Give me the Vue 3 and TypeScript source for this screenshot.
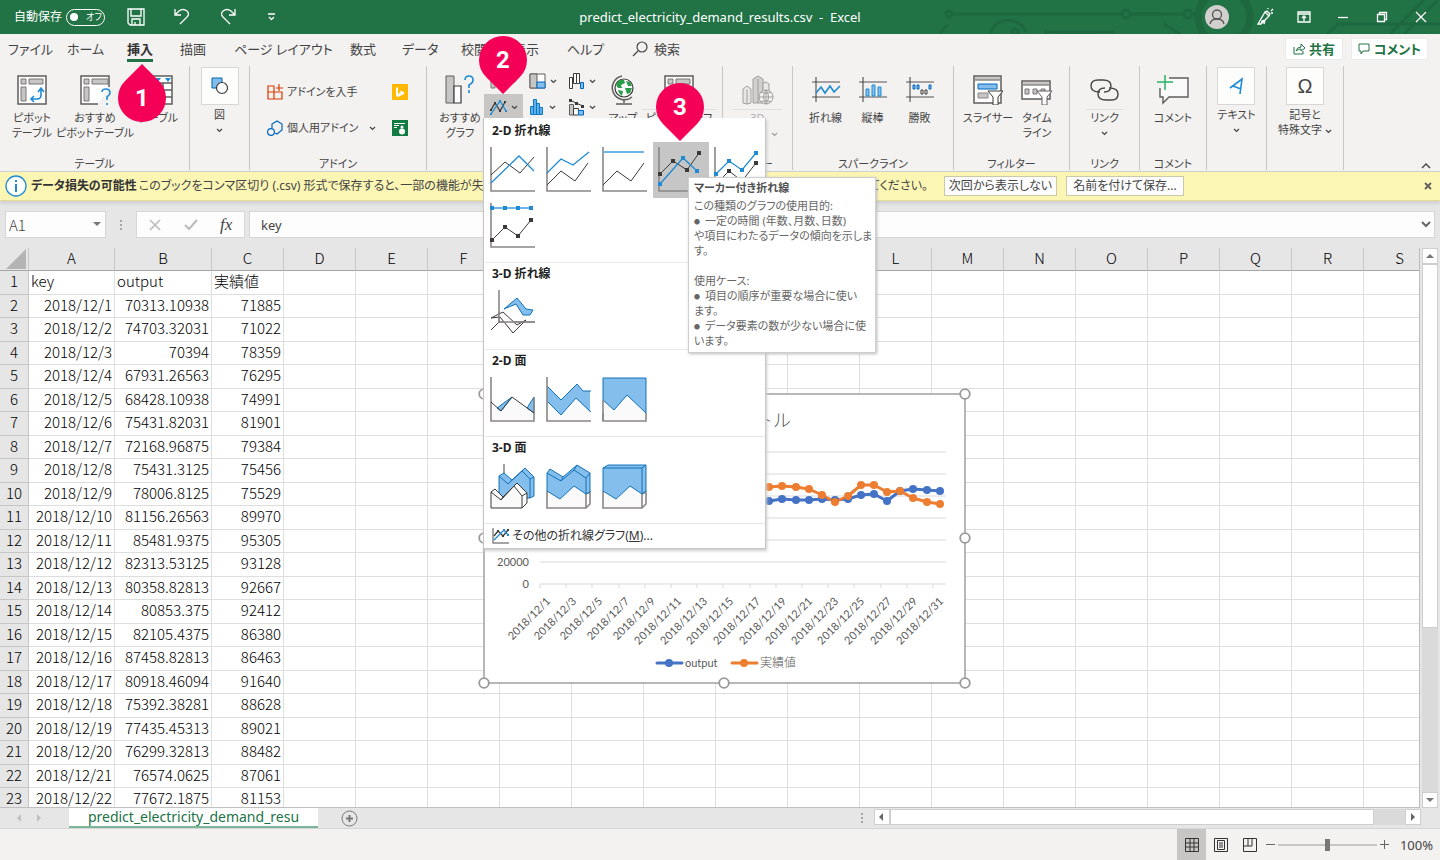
<script setup lang="ts">
import { ref } from 'vue'

interface Shape {
  d: string
  cls: string
}
interface ChartKind {
  name: string
  shapes: Shape[]
  dots?: { x: number; y: number; cls: string }[]
}
interface Section {
  title: string
  kinds: ChartKind[]
}

const tabs = ['ファイル', 'ホーム', '挿入', '描画', 'ページ レイアウト', '数式', 'データ', '校閲', '表示', 'ヘルプ']
const activeTab = ref('挿入')
const cellRef = ref('A1')
const cellValue = ref('key')
const zoom = ref(100)
const autosave = ref(false)

const letters = 'ABCDEFGHIJKLMNOPQRS'.split('')
const outputs = [
  '70313.10938', '74703.32031', '70394', '67931.26563', '68428.10938', '75431.82031', '72168.96875',
  '75431.3125', '78006.8125', '81156.26563', '85481.9375', '82313.53125', '80358.82813', '80853.375',
  '82105.4375', '87458.82813', '80918.46094', '75392.38281', '77435.45313', '76299.32813', '76574.0625',
  '77672.1875',
]
const actuals = [
  71885, 71022, 78359, 76295, 74991, 81901, 79384, 75456, 75529, 89970, 95305, 93128, 92667, 92412, 86380,
  86463, 91640, 88628, 89021, 88482, 87061, 81153,
]
const rows = [
  ['key', 'output', '実績値'],
  ...outputs.map((o, i) => [`2018/12/${i + 1}`, o, String(actuals[i])]),
]

const axes = { d: 'M1 0V44H45', cls: 'axis' }
const dots = (pts: number[][], cls: string) => pts.map(([x, y]) => ({ x, y, cls }))

const sections: Section[] = [
  {
    title: '2-D 折れ線',
    kinds: [
      { name: '折れ線', shapes: [axes, { d: 'M1 28L15 15L30 26L44 10', cls: 'dark' }, { d: 'M1 36L29 9L44 24', cls: 'blue' }] },
      { name: '積み上げ折れ線', shapes: [axes, { d: 'M1 26L15 12L27 18L43 5', cls: 'blue' }, { d: 'M1 38L15 24L29 34L42 16', cls: 'dark' }] },
      { name: '100% 積み上げ折れ線', shapes: [axes, { d: 'M1 5H42', cls: 'pale' }, { d: 'M1 38L15 24L29 34L42 16', cls: 'dark' }] },
      {
        name: 'マーカー付き折れ線',
        shapes: [axes, { d: 'M2 27L15 14L29 23L41 6', cls: 'dark' }, { d: 'M2 37L25 11L39 24', cls: 'blue' }],
        dots: [...dots([[2, 27], [15, 14], [29, 23], [41, 6]], 'dot-dark'), ...dots([[2, 37], [25, 11], [39, 24]], 'dot-blue')],
      },
      {
        name: 'マーカー付き積み上げ折れ線',
        shapes: [axes, { d: 'M2 27L15 14L28 23L42 6', cls: 'blue' }, { d: 'M2 37L15 24L28 34L42 16', cls: 'dark' }],
        dots: [...dots([[2, 27], [15, 14], [28, 23], [42, 6]], 'dot-blue'), ...dots([[2, 37], [15, 24], [28, 34], [42, 16]], 'dot-dark')],
      },
      {
        name: 'マーカー付き 100% 積み上げ折れ線',
        shapes: [axes, { d: 'M2 5H41', cls: 'pale' }, { d: 'M2 37L15 24L28 33L41 17', cls: 'dark' }],
        dots: [...dots([[2, 5], [15, 5], [28, 5], [41, 5]], 'dot-blue'), ...dots([[2, 37], [15, 24], [28, 33], [41, 17]], 'dot-dark')],
      },
    ],
  },
  {
    title: '3-D 折れ線',
    kinds: [
      {
        name: '3-D 折れ線',
        shapes: [
          { d: 'M9 0V32H45', cls: 'axis' },
          { d: 'M9 32L1 40', cls: 'dark' },
          { d: 'M14 19L27 8L36 19L43 20L40 25L33 25L26 14Z', cls: 'fill-blue' },
          { d: 'M1 28L13 22L27 35L36 30L23 43L10 27Z', cls: 'fill-white' },
          { d: 'M9 22V32H45', cls: 'axis' },
        ],
      },
    ],
  },
  {
    title: '2-D 面',
    kinds: [
      {
        name: '面',
        shapes: [
          { d: 'M1 25L11 34L22 20L44 36V44H1Z', cls: 'fill-none' },
          { d: 'M7 31L22 20L11 34ZM37 31L44 20V36Z', cls: 'fill-blue' },
          { d: 'M1 0V44H44V20', cls: 'axis' },
          { d: 'M1 25L11 34L22 20L44 36', cls: 'dark' },
        ],
      },
      {
        name: '積み上げ面',
        shapes: [
          { d: 'M1 24L15 38L30 21L44 35V44H1Z', cls: 'fill-none' },
          { d: 'M1 9L15 23L31 7L37 14H44V35L30 21L15 38L1 24Z', cls: 'fill-pale' },
          { d: 'M1 9L15 23L31 7L37 14H45M1 24L15 38L30 21L45 35', cls: 'deep' },
          axes,
        ],
      },
      {
        name: '100% 積み上げ面',
        shapes: [
          { d: 'M1 23L12 33L25 18L44 36V44H1Z', cls: 'fill-none' },
          { d: 'M1 36V44H44V36', cls: 'axis' },
          { d: 'M1 1H44V36L25 18L12 33L1 23Z', cls: 'fill-blue' },
          { d: 'M1 23V44', cls: 'axis' },
        ],
      },
    ],
  },
  {
    title: '3-D 面',
    kinds: [
      {
        name: '3-D 面',
        shapes: [
          { d: 'M14 0V12', cls: 'axis' },
          { d: 'M9 12L14 9L22 16L35 4L44 13V32L40 34H9Z', cls: 'fill-blue' },
          { d: 'M9 12L18 20L32 7L40 15V34M40 15L44 13M18 20L22 16M32 7L35 4', cls: 'deep' },
          { d: 'M1 28L5 25L13 33L27 19L37 29V39L32 44H1Z', cls: 'fill-white' },
          { d: 'M1 28L11 36L24 22L32 32V44M32 32L37 29M11 36L13 33M24 22L27 19', cls: 'dark' },
        ],
      },
      {
        name: '3-D 積み上げ面',
        shapes: [
          { d: 'M1 27L14 35L28 22L40 30V44H1Z', cls: 'fill-none' },
          { d: 'M1 27V44H40L44 40V28L40 30V44', cls: 'axis' },
          { d: 'M1 9L4 5L17 13L31 1L44 9V28L40 30L28 22L14 35L1 27Z', cls: 'fill-blue' },
          { d: 'M1 9L15 17L28 6L40 14V30M40 14L44 9M15 17L17 13M28 6L31 1', cls: 'deep' },
        ],
      },
      {
        name: '3-D 100% 積み上げ面',
        shapes: [
          { d: 'M1 27L14 35L28 22L40 30V44H1Z', cls: 'fill-none' },
          { d: 'M1 27V44H40L44 40V28L40 30V44', cls: 'axis' },
          { d: 'M1 4L6 1H44V27L40 30L28 22L14 35L1 27Z', cls: 'fill-blue' },
          { d: 'M1 4H40V30M40 4L44 1', cls: 'deep' },
        ],
      },
    ],
  },
]

const px = [285, 298, 312, 325, 338, 351, 364, 377, 390, 403, 416, 429, 443, 456]
const blueY = [107, 105, 106, 106, 105, 106, 105, 101, 100, 107, 97, 95, 96, 97]
const orangeY = [93, 92, 93, 95, 101, 108, 102, 91, 91, 98, 97, 104, 108, 110]
const line = (ys: number[]) => ys.map((y, i) => `${px[i]},${y}`).join(' ')
const days = Array.from({ length: 16 }, (_, i) => i * 2 + 1)
const handles = [[0, 0], [240, 0], [481, 0], [0, 144], [481, 144], [0, 289], [240, 289], [481, 289]]
</script>

<template>
  <div class="app">
    <header class="titlebar">
      <svg class="circuit" width="500" height="34" viewBox="0 0 500 34" fill="none" stroke="#1b5e3a" stroke-width="3">
        <circle cx="9" cy="14" r="3" /><path d="M12 14H182M190 14H225M50 34a19 19 0 0 1 36-2M118 34H156L150 33" />
        <circle cx="186" cy="14" r="4" /><circle cx="248" cy="14" r="4" /><path d="M190 14H244M252 14H258" />
        <circle cx="75" cy="32" r="3" /><path d="M0 34a20 20 0 0 1 8-9M104 32H175M224 24L240 34" />
        <circle cx="284" cy="17" r="26" stroke-width="7" /><path d="M387 34L398 24H500M450 34L484 0M464 34L498 0" />
      </svg>
      <label class="autosave">自動保存
        <input v-model="autosave" type="checkbox" aria-label="自動保存" />
        <span class="switch"><i></i>オフ</span>
      </label>
      <button class="tb save" aria-label="上書き保存">
        <svg width="18" height="18" viewBox="0 0 18 18"><path d="M1 1H17V17H3L1 15ZM4 1V8H14V1M5 17V11H13V17M8 14V17" /></svg>
      </button>
      <button class="tb undo" aria-label="元に戻す">
        <svg width="18" height="18" viewBox="0 0 18 18"><path d="M2 1V7H8M2 7L6 3Q10 0 14 3Q17 6 14 9L7 16" /></svg>
      </button>
      <button class="tb redo" aria-label="やり直し">
        <svg width="18" height="18" viewBox="0 0 18 18"><path d="M16 1V7H10M16 7L12 3Q8 0 4 3Q1 6 4 9L11 16" /></svg>
      </button>
      <button class="tb custom" aria-label="クイック アクセス ツール バーのユーザー設定">
        <svg width="9" height="8" viewBox="0 0 9 8"><path d="M1 1H8M2 4L4.500 6.500L7 4" /></svg>
      </button>
      <div class="doc-title">predict_electricity_demand_results.csv&nbsp; -&nbsp; Excel</div>
      <div class="window-tools">
        <button class="avatar" aria-label="アカウント">
          <svg width="24" height="24" viewBox="0 0 24 24"><circle cx="12" cy="12" r="12" fill="#d2d0ce" /><g fill="none" stroke="#555" stroke-width="1.300"><circle cx="12" cy="9.500" r="4.500" /><path d="M5 19Q6 14 12 14T19 19" /></g></svg>
        </button>
        <button class="tb" aria-label="近日公開の機能">
          <svg width="18" height="18" viewBox="0 0 18 18"><path d="M2 16L9 4L13 8L5 16ZM9 4L11 3L14 6L13 8M5 16L6 13L9 12L8 16M12 1V0M15 3L17 1M15 5H17" /></svg>
        </button>
        <button class="tb" aria-label="リボンの表示オプション">
          <svg width="14" height="12" viewBox="0 0 14 12"><path d="M1 1H13V11H1ZM1 3H13M7 10V5M5 7L7 5L9 7" /></svg>
        </button>
        <button class="tb" aria-label="最小化"><svg width="12" height="12" viewBox="0 0 12 12"><path d="M1 6.500H11" /></svg></button>
        <button class="tb" aria-label="元のサイズに戻す"><svg width="12" height="12" viewBox="0 0 12 12"><path d="M1.500 3.500H8.500V10.500H1.500ZM3.500 3V1.500H10.500V8.500H9" /></svg></button>
        <button class="tb" aria-label="閉じる"><svg width="12" height="12" viewBox="0 0 12 12"><path d="M1 1L11 11M11 1L1 11" /></svg></button>
      </div>
    </header>

    <div class="tabbar">
      <nav class="tabs">
        <button v-for="t in tabs" :key="t" :class="{ active: t === activeTab }" @click="activeTab = t"><span>{{ t }}</span></button>
      </nav>
      <button class="search">
        <svg width="16" height="16" viewBox="0 0 16 16" fill="none" stroke="#444" stroke-width="1.200"><circle cx="10" cy="6" r="5" /><path d="M6 10L1 15" /></svg>
        検索
      </button>
      <div class="share">
        <button><svg width="12" height="12" viewBox="0 0 12 12"><path d="M1 4V11H10V8M3 8Q4 4 8 4V1L12 5L8 8V6Q5 6 3 8" /></svg>共有</button>
        <button><svg width="12" height="12" viewBox="0 0 12 12"><path d="M1 1H11V8H5L3 11V8H1Z" /></svg>コメント</button>
      </div>
    </div>

    <div class="ribbon">
      <section class="group g-table">
        <div class="tools">
          <button class="big">
            <svg width="30" height="30" viewBox="0 0 30 30"><path class="ln" d="M1 1H29V29H1Z" /><path class="gr" d="M4 4H9V9H4ZM12 4H26V9H12ZM4 12H9V26H4Z" /><path class="bl" d="M14 24H20Q24 24 24 20V14M21 17L24 13L27 17M17 21L14 24L17 27" /></svg>
            <span>ピボット<br />テーブル</span>
          </button>
          <button class="big">
            <svg width="34" height="30" viewBox="-2 0 34 30"><path class="ln" d="M18 29H1V1H29V12" /><path class="gr" d="M4 4H9V9H4ZM12 4H28V9H12ZM4 12H9V26H4Z" /><path class="bl" d="M22 17Q22 14 26 14T30 18Q30 20 27 22V25M27 28V30" /></svg>
            <span>おすすめ<br />ピボットテーブル</span>
          </button>
          <button class="big">
            <svg width="30" height="30" viewBox="0 0 30 30"><path class="ln" d="M1 1H29V29H1ZM1 8H29M1 15H29M1 22H29M10 8V29M20 8V29" /><path fill="#1e8bd4" d="M3 3H8L5 7ZM12 3H18L15 7ZM22 3H28L25 7Z" /></svg>
            <span>テーブル</span>
          </button>
        </div>
        <h3>テーブル</h3>
      </section>

      <section class="group">
        <div class="tools one">
          <button class="boxed">
            <b><svg width="18" height="18" viewBox="0 0 18 18"><path d="M1 1H11V11H1Z" fill="#83beec" stroke="#0063b1" /><circle cx="11" cy="11" r="5.500" fill="#fff" stroke="#3b3a39" stroke-width="1.200" /></svg></b>
            <span>図</span>
            <svg class="chev" width="7" height="5" viewBox="0 0 7 5"><path d="M1 1L3.500 3.500L6 1" /></svg>
          </button>
        </div>
      </section>

      <section class="group">
        <div class="tools addins">
          <button>
            <svg width="16" height="16" viewBox="0 0 16 16" fill="none" stroke="#d83b01" stroke-width="1.200"><path d="M1 2H7V8H1ZM1 8H7V15H1ZM7 8H15V15H7ZM12 0V7M9 4H16" /></svg>
            アドインを入手
          </button>
          <button class="bing" aria-label="Bing マップ">
            <svg width="16" height="16" viewBox="0 0 16 16"><path d="M0 0H16V16H0Z" fill="#ffb900" /><path d="M4 3L6 4V10L9 8L7 6L12 8V10L6 13L4 12Z" fill="#fff" /></svg>
          </button>
          <button>
            <svg width="16" height="16" viewBox="0 0 16 16" fill="none" stroke="#0067c0" stroke-width="1.200"><path d="M5 8V4L10 1L15 4V10L10 14L8 13" /><circle cx="4" cy="12" r="3.400" /></svg>
            個人用アドイン
            <svg class="chev" width="7" height="5" viewBox="0 0 7 5"><path d="M1 1L3.500 3.500L6 1" /></svg>
          </button>
          <button class="bing" aria-label="People Graph">
            <svg width="16" height="16" viewBox="0 0 16 16"><path d="M0 0H16V16H0Z" fill="#107c41" /><path d="M2 3.500H13M2 5.500H7M2 7.500H5" stroke="#fff" /><circle cx="10" cy="7" r="1.500" fill="#fff" /><circle cx="10" cy="11.500" r="3" fill="#fff" /></svg>
          </button>
        </div>
        <h3>アドイン</h3>
      </section>

      <section class="group g-chart">
        <div class="tools">
          <button class="big">
            <svg width="30" height="30" viewBox="0 0 30 30"><path d="M1 1H9V28H1Z" fill="#c8c6c4" stroke="#605e5c" /><path d="M9 11H16V28H9Z" fill="#fff" stroke="#3b3a39" stroke-width="1.200" /><path class="bl" d="M20 5Q20 1 24 1T28 5Q28 8 24 10V13M24 15V18" /></svg>
            <span>おすすめ<br />グラフ</span>
          </button>
          <div class="splits">
            <button aria-label="縦棒/横棒グラフの挿入"><svg width="16" height="16" viewBox="0 0 16 16"><path class="gr" d="M1 6H5V15H1Z" /></svg><svg class="chev" width="7" height="5" viewBox="0 0 7 5"><path d="M1 1L3.500 3.500L6 1" /></svg></button>
            <button aria-label="階層構造グラフの挿入"><svg width="17" height="16" viewBox="0 0 17 16"><path d="M1 1H16V15H1Z" fill="#fff" stroke="#605e5c" /><path d="M1 1H8V15H1Z" fill="#c8c6c4" stroke="#605e5c" /><path d="M8 9H16V15H8Z" fill="#83beec" stroke="#0067c0" /></svg><svg class="chev" width="7" height="5" viewBox="0 0 7 5"><path d="M1 1L3.500 3.500L6 1" /></svg></button>
            <button aria-label="ウォーターフォール図の挿入"><svg width="17" height="16" viewBox="0 0 17 16" fill="#fff" stroke="#3b3a39"><path d="M1.500 4.500H4.500V15.500H1.500ZM5.500 .5H8.500V10.500H5.500ZM8.500 .5H11.500V10.500H8.500" /><path d="M12.500 9.500H15.500V15.500H12.500Z" stroke="#0067c0" fill="#83beec" /></svg><svg class="chev" width="7" height="5" viewBox="0 0 7 5"><path d="M1 1L3.500 3.500L6 1" /></svg></button>
            <button class="open" aria-label="折れ線/面グラフの挿入"><svg width="17" height="16" viewBox="0 0 17 16" fill="none"><path d="M1 11L5 4L10 12L15 3" stroke="#3b3a39" stroke-width="1.300" /><path d="M1 15L10 2L16 12" stroke="#1e8bd4" stroke-width="1.300" /><path d="M4 3h2v2h-2zM14 2h2v2h-2zM9 11h2v2h-2zM0 10h2v2h-2z" fill="#3b3a39" /><path d="M9 1h2v2h-2zM15 11h2v2h-2zM0 14h2v2h-2z" fill="#1e8bd4" /></svg><svg class="chev" width="7" height="5" viewBox="0 0 7 5"><path d="M1 1L3.500 3.500L6 1" /></svg></button>
            <button aria-label="統計グラフの挿入"><svg width="16" height="16" viewBox="0 0 16 16"><path d="M1.500 7.500H4.500V15.500H1.500ZM4.500 .5H7.500V15.500H4.500ZM7.500 4.500H10.500V15.500H7.500ZM10.500 8.500H13.500V15.500H10.500Z" fill="#5fb0e8" stroke="#0b78c8" /></svg><svg class="chev" width="7" height="5" viewBox="0 0 7 5"><path d="M1 1L3.500 3.500L6 1" /></svg></button>
            <button aria-label="複合グラフの挿入"><svg width="17" height="17" viewBox="0 0 17 17"><path d="M1.500 5.500H5.500V16H1.500Z" fill="#c8c6c4" stroke="#605e5c" /><path d="M5.500 9.500H10.500V16H5.500Z" fill="#fff" stroke="#3b3a39" /><path d="M10.500 11.500H15.500V16H10.500Z" fill="#83beec" stroke="#0067c0" /><path d="M2 1L8 4L15 7" fill="none" stroke="#3b3a39" /><path d="M1 0h3v3H1zM7 3h3v3H7zM13 6h3v3h-3z" fill="#3b3a39" /></svg><svg class="chev" width="7" height="5" viewBox="0 0 7 5"><path d="M1 1L3.500 3.500L6 1" /></svg></button>
          </div>
          <button class="big map">
            <svg width="26" height="30" viewBox="0 0 26 30"><circle cx="14" cy="13" r="9" fill="#fff" stroke="#3b3a39" stroke-width="1.200" /><path d="M6 10L9 5L14 5L15 8L11 10L12 13L8 13ZM16 6L20 7L22 11L18 11ZM15 13L22 13L20 18L17 19ZM8 15L13 16L12 21L9 18Z" fill="#2a9d4b" /><path d="M12 1A12 12 0 1 0 22 22M14 25V28M6 29H22" fill="none" stroke="#605e5c" stroke-width="1.500" /></svg>
            <span>マップ</span>
          </button>
          <button class="big ruled">
            <svg width="30" height="30" viewBox="0 0 30 30"><path class="ln" d="M1 1H29V29H1Z" /><path class="gr" d="M4 4H9V9H4ZM12 4H26V9H12ZM4 12H9V26H4Z" /></svg>
            <span>ピボットグラフ</span>
          </button>
        </div>
        <h3>グラフ</h3>
      </section>

      <section class="group">
        <div class="tools one">
          <button class="big ruled dim">
            <svg width="32" height="30" viewBox="0 0 32 30" fill="none" stroke="#a19f9d"><path d="M1 14L5 11L9 14V28L5 29L1 28ZM5 15V29" fill="#e8e6e4" /><path d="M11 4L16 1L21 4V28H11ZM16 4V28" fill="#d2d0ce" /><path d="M21 8L24 7L27 9V16H21Z" fill="#e8e6e4" /><circle cx="24" cy="22" r="7" fill="#f3f2f1" /><path d="M17 22H31M24 15V29M19 17Q24 20 29 17M19 27Q24 24 29 27M24 15Q19 22 24 29Q29 22 24 15" /></svg>
            <span>3D<br />マップ&nbsp; <svg class="chev inline" width="7" height="5" viewBox="0 0 7 5"><path d="M1 1L3.500 3.500L6 1" /></svg></span>
          </button>
        </div>
        <h3>ツアー</h3>
      </section>

      <section class="group g-spark">
        <div class="tools">
          <button class="big">
            <svg width="30" height="30" viewBox="0 0 30 30"><path class="gl" d="M1 7H29M1 22H29" /><path d="M5 2V27" stroke="#3b3a39" /><path class="bl" d="M5 18L10 12L14 18L19 11L23 17L29 11" /></svg>
            <span>折れ線</span>
          </button>
          <button class="big">
            <svg width="30" height="30" viewBox="0 0 30 30"><path class="gl" d="M1 7H29M1 22H29" /><path d="M5 2V27" stroke="#3b3a39" /><path d="M8 14H11V21H8ZM14 10H17V21H14ZM20 12H23V21H20Z" fill="#83beec" stroke="#1e8bd4" /></svg>
            <span>縦棒</span>
          </button>
          <button class="big">
            <svg width="30" height="30" viewBox="0 0 30 30"><path class="gl" d="M1 7H29M1 22H29" /><path d="M5 2V27" stroke="#3b3a39" /><path d="M8 10H10V14H8ZM12 10H14V14H12ZM24 10H26V14H24Z" fill="#83beec" stroke="#0067c0" /><path d="M16 15H18V19H16ZM20 15H22V19H20Z" fill="#fff" stroke="#3b3a39" /></svg>
            <span>勝敗</span>
          </button>
        </div>
        <h3>スパークライン</h3>
      </section>

      <section class="group g-filter">
        <div class="tools">
          <button class="big">
            <svg width="30" height="30" viewBox="0 0 30 30"><path class="ln" d="M1 1H28V28H1Z" /><path d="M2 2H27V5H2Z" fill="#c8c6c4" /><path d="M1 5H28" class="gl" /><path d="M5 9H24V14H5Z" fill="#83beec" stroke="#0067c0" /><path d="M5 18H15V23H5Z" fill="#c8c6c4" stroke="#8a8886" /><path d="M15 16H30L25 22V30H20V22Z" fill="#fff" stroke="#3b3a39" /></svg>
            <span>スライサー</span>
          </button>
          <button class="big">
            <svg width="32" height="30" viewBox="0 0 32 30"><path class="ln" d="M1 6H29V24H1Z" /><path d="M2 7H28V10H2Z" fill="#c8c6c4" /><path d="M1 10H29" class="gl" /><path d="M4 14H8V19H4ZM12 14H16V19H12ZM20 14H24V19H20Z" class="gr" /><path d="M16 16H31L26 22V30H21V22Z" fill="#fff" stroke="#605e5c" /></svg>
            <span>タイム<br />ライン</span>
          </button>
        </div>
        <h3>フィルター</h3>
      </section>

      <section class="group">
        <div class="tools one">
          <button class="big ruled">
            <svg width="30" height="30" viewBox="0 0 30 30" fill="none" stroke="#484644" stroke-width="1.400"><path d="M10 17Q1 17 1 11Q1 5 8 5H13Q21 5 21 11Q21 17 14 17M19 13Q28 13 28 19Q28 25 22 25H16Q8 25 8 19Q8 13 15 13" /></svg>
            <span>リンク</span>
            <svg class="chev" width="7" height="5" viewBox="0 0 7 5"><path d="M1 1L3.500 3.500L6 1" /></svg>
          </button>
        </div>
        <h3>リンク</h3>
      </section>

      <section class="group">
        <div class="tools one">
          <button class="big">
            <svg width="32" height="30" viewBox="0 0 32 30" fill="none"><path d="M12 3H31V22H12L6 28V22H3V13" fill="#fafafa" stroke="#605e5c" stroke-width="1.400" /><path d="M8 0V15M0 7H16" stroke="#2eb365" stroke-width="1.500" /></svg>
            <span>コメント</span>
          </button>
        </div>
        <h3>コメント</h3>
      </section>

      <section class="group">
        <div class="tools one">
          <button class="boxed">
            <b><svg width="16" height="18" viewBox="0 0 16 18" fill="none" stroke="#1e8bd4" stroke-width="1.600"><path d="M2 11L14 2L12 17M5 9L13 12" /></svg></b>
            <span>テキスト</span>
            <svg class="chev" width="7" height="5" viewBox="0 0 7 5"><path d="M1 1L3.500 3.500L6 1" /></svg>
          </button>
        </div>
      </section>

      <section class="group">
        <div class="tools one">
          <button class="boxed">
            <b class="omega">Ω</b>
            <span>記号と<br />特殊文字 <svg class="chev inline" width="7" height="5" viewBox="0 0 7 5"><path d="M1 1L3.500 3.500L6 1" /></svg></span>
          </button>
        </div>
      </section>
      <button class="collapse" aria-label="リボンを折りたたむ"><svg width="10" height="7" viewBox="0 0 10 7"><path d="M1 6L5 2L9 6" /></svg></button>
    </div>

    <div class="infobar">
      <svg width="22" height="22" viewBox="0 0 22 22"><circle cx="11" cy="11" r="10" fill="#fff" stroke="#1e8bd4" stroke-width="1.300" /><path d="M11 9V17M11 5V7" stroke="#1e8bd4" stroke-width="2" /></svg>
      <div class="message">
        <p><strong>データ損失の可能性</strong>このブックをコンマ区切り (.csv) 形式で保存すると、一部の機能が失われる可能性があります。</p>
        <span>保存してください。</span>
      </div>
      <button class="never">次回から表示しない</button>
      <button class="save-as">名前を付けて保存...</button>
      <button class="dismiss" aria-label="閉じる"><svg width="8" height="8" viewBox="0 0 8 8"><path d="M1 1L7 7M7 1L1 7" stroke="#605e5c" stroke-width="1.800" /></svg></button>
    </div>

    <div class="formula">
      <div class="namebox">
        <input v-model="cellRef" aria-label="名前ボックス" />
        <button aria-label="名前の一覧"><svg width="8" height="5" viewBox="0 0 8 5"><path d="M0 0H8L4 4Z" fill="#777" /></svg></button>
      </div>
      <svg width="3" height="12" viewBox="0 0 3 12"><path d="M0 1h2v2H0zM0 5h2v2H0zM0 9h2v2H0z" fill="#a6a6a6" /></svg>
      <div class="fx">
        <button aria-label="キャンセル"><svg width="12" height="12" viewBox="0 0 12 12"><path d="M1 1L11 11M11 1L1 11" stroke="#bcbcbc" stroke-width="1.600" /></svg></button>
        <button aria-label="入力"><svg width="14" height="12" viewBox="0 0 14 12"><path d="M1 6L5 10L13 1" fill="none" stroke="#bcbcbc" stroke-width="2.200" /></svg></button>
        <button class="fn" aria-label="関数の挿入">fx</button>
      </div>
      <div class="entry">
        <input v-model="cellValue" aria-label="数式バー" />
        <button aria-label="数式バーの展開"><svg width="10" height="7" viewBox="0 0 10 7"><path d="M1 1L5 5L9 1" fill="none" stroke="#666" stroke-width="2" /></svg></button>
      </div>
    </div>

    <div class="workspace">
      <div class="sheet">
        <table>
          <colgroup>
            <col class="c-num" /><col class="c-a" /><col class="c-b" />
            <col v-for="n in 17" :key="n" class="c-std" />
          </colgroup>
          <thead>
            <tr>
              <th><svg width="20" height="20" viewBox="0 0 20 20"><path d="M20 0V20H0Z" fill="#b4b4b4" /></svg></th>
              <th v-for="l in letters" :key="l">{{ l }}</th>
            </tr>
          </thead>
          <tbody>
            <tr v-for="(r, i) in rows" :key="i">
              <th>{{ i + 1 }}</th>
              <td v-for="(l, c) in letters" :key="l" :class="{ num: i > 0 }">{{ r[c] }}</td>
            </tr>
          </tbody>
        </table>
        <svg class="chart" width="495" height="303" viewBox="-7 -7 495 303">
          <path d="M0 0H481V289H0Z" fill="#fff" stroke="#a0a0a0" stroke-width="1.500" />
          <text x="307" y="33" class="c-title" text-anchor="end">グラフ タイトル</text>
          <path d="M56 58H462M56 80H462M56 102H462M56 124H462M56 146H462M56 168H462M56 190H462" stroke="#d9d9d9" />
          <path v-for="(d, i) in days" :key="d" :d="`M${56 + Math.round(i * 26.2)} 190v4`" stroke="#d9d9d9" />
          <text x="45" y="172" text-anchor="end">20000</text>
          <text x="45" y="194" text-anchor="end">0</text>
          <text v-for="(d, i) in days" :key="'t' + d" text-anchor="end" :transform="`translate(${67 + Math.round(i * 26.2)} 208) rotate(-45)`">2018/12/{{ d }}</text>
          <g fill="none" stroke-width="3" stroke-linejoin="round">
            <polyline :points="line(blueY)" stroke="#4472c4" /><polyline :points="line(orangeY)" stroke="#ed7d31" />
            <path d="M173 269H198" stroke="#4472c4" stroke-linecap="round" /><path d="M248 269H273" stroke="#ed7d31" stroke-linecap="round" />
          </g>
          <circle v-for="(x, i) in px" :key="'b' + x" :cx="x" :cy="blueY[i]" r="4" fill="#4472c4" />
          <circle v-for="(x, i) in px" :key="'o' + x" :cx="x" :cy="orangeY[i]" r="4" fill="#ed7d31" />
          <circle cx="185" cy="269" r="4" fill="#4472c4" /><circle cx="260" cy="269" r="4" fill="#ed7d31" />
          <text x="201" y="273">output</text><text x="276" y="273" class="jp">実績値</text>
          <circle v-for="([x, y], i) in handles" :key="'h' + i" :cx="x" :cy="y" r="4.800" fill="#fff" stroke="#999" stroke-width="1.800" />
        </svg>
      </div>
      <div class="vscroll">
        <button aria-label="上へ"><svg width="8" height="4" viewBox="0 0 8 4"><path d="M0 4H8L4 0Z" fill="#777" /></svg></button>
        <div class="vtrack"><div class="vthumb"></div></div>
        <button aria-label="下へ"><svg width="8" height="4" viewBox="0 0 8 4"><path d="M0 0H8L4 4Z" fill="#777" /></svg></button>
      </div>
    </div>

    <div class="sheetbar">
      <button class="nav" aria-label="前のシート"><svg width="5" height="8" viewBox="0 0 5 8"><path d="M4 0V8L0 4Z" fill="#c0c0c0" /></svg></button>
      <button class="nav" aria-label="次のシート"><svg width="5" height="8" viewBox="0 0 5 8"><path d="M0 0V8L4 4Z" fill="#c0c0c0" /></svg></button>
      <button class="sheet-tab">predict_electricity_demand_resu</button>
      <button class="add" aria-label="新しいシート"><svg width="17" height="17" viewBox="0 0 17 17" fill="none" stroke="#777"><circle cx="8.500" cy="8.500" r="7.500" /><path d="M8.500 5V12M5 8.500H12" stroke-width="2" /></svg></button>
      <svg class="grip" width="3" height="12" viewBox="0 0 3 12"><path d="M0 1h2v2H0zM0 5h2v2H0zM0 9h2v2H0z" fill="#a6a6a6" /></svg>
      <div class="hscroll">
        <button aria-label="左へ"><svg width="5" height="8" viewBox="0 0 5 8"><path d="M4 0V8L0 4Z" fill="#666" /></svg></button>
        <div class="htrack"><div class="hthumb"></div></div>
        <button aria-label="右へ"><svg width="5" height="8" viewBox="0 0 5 8"><path d="M0 0V8L4 4Z" fill="#666" /></svg></button>
      </div>
    </div>

    <footer class="status">
      <button class="on" aria-label="標準"><svg width="14" height="14" viewBox="0 0 14 14"><path d="M.5.5H13.500V13.500H.5ZM.5 5H13.500M.5 9H13.500M5 .5V13.500M9 .5V13.500" /></svg></button>
      <button aria-label="ページ レイアウト"><svg width="14" height="14" viewBox="0 0 14 14"><path d="M.5.5H13.500V13.500H.5ZM3.500 2.500H10.500V11.500H3.500ZM5 5H9M5 7H9M5 9H9" /></svg></button>
      <button aria-label="改ページ プレビュー"><svg width="14" height="14" viewBox="0 0 14 14"><path d="M.5.5H13.500V13.500H.5ZM.5 8H9V.5M5 .5V8" /></svg></button>
      <button class="step" aria-label="縮小"><svg width="9" height="9" viewBox="0 0 9 9"><path d="M0 4.500H9" /></svg></button>
      <input v-model="zoom" type="range" min="0" max="200" aria-label="ズーム" />
      <button class="step" aria-label="拡大"><svg width="9" height="9" viewBox="0 0 9 9"><path d="M0 4.500H9M4.500 0V9" /></svg></button>
      <button class="pct">{{ zoom }}%</button>
    </footer>

    <div class="menu">
      <section v-for="s in sections" :key="s.title">
        <h4>{{ s.title }}</h4>
        <div class="gallery">
          <button v-for="k in s.kinds" :key="k.name" :aria-label="k.name" :class="{ hot: k.name === 'マーカー付き折れ線' }">
            <svg width="46" height="46" viewBox="0 0 46 46">
              <path v-for="(p, i) in k.shapes" :key="i" :d="p.d" :class="p.cls" />
              <rect v-for="(p, i) in k.dots" :key="'d' + i" :x="p.x - 2" :y="p.y - 2" width="4" height="4" :class="p.cls" />
            </svg>
          </button>
        </div>
      </section>
      <button class="more">
        <svg width="18" height="18" viewBox="0 0 18 18" fill="none"><path d="M1 1V16H17" stroke="#8a8886" stroke-width="1.500" /><path d="M2 9L6 4L11 9L16 3" stroke="#3b3a39" stroke-width="1.300" /><path d="M2 13L12 3L16 8" stroke="#1e8bd4" stroke-width="1.300" /><path d="M5 3h2v2H5zM15 2h2v2h-2zM10 8h2v2h-2z" fill="#3b3a39" /><path d="M11 2h2v2h-2zM15 7h2v2h-2z" fill="#1e8bd4" /></svg>
        その他の折れ線グラフ(<u>M</u>)...
      </button>
    </div>

    <div class="tip" role="tooltip">
      <strong>マーカー付き折れ線</strong>
      <p>この種類のグラフの使用目的:<br /><i>●</i>一定の時間 (年数、月数、日数)<br />や項目にわたるデータの傾向を示しま<br />す。</p>
      <p>使用ケース:<br /><i>●</i>項目の順序が重要な場合に使い<br />ます。<br /><i>●</i>データ要素の数が少ない場合に使<br />います。</p>
    </div>

    <div class="pin up p1"><span>1</span></div>
    <div class="pin p2"><span>2</span></div>
    <div class="pin p3"><span>3</span></div>
  </div>
</template>

<style>
body {
  margin: 0;
}
</style>

<style scoped>
* {
  box-sizing: border-box;
}
.app {
  position: relative;
  display: flex;
  flex-direction: column;
  height: 100vh;
  overflow: hidden;
  background: #f3f2f1;
  color: #444;
  font: 12px/16px "Noto Sans", "Noto Sans CJK JP", sans-serif;
  font-feature-settings: "palt";
}
button,
input {
  font: inherit;
  color: inherit;
  font-feature-settings: inherit;
}
button {
  display: flex;
  align-items: center;
  justify-content: center;
  padding: 0;
  border: 0;
  background: none;
  white-space: nowrap;
}
svg {
  flex: none;
  display: block;
}
h3,
h4,
p {
  margin: 0;
}

/* title bar */
.titlebar {
  position: relative;
  display: flex;
  align-items: center;
  height: 34px;
  padding: 0 14px;
  background: #217346;
  color: #fff;
}
.circuit {
  position: absolute;
  right: 0;
  top: 0;
  opacity: 0.5;
}
.autosave {
  display: flex;
  align-items: center;
  gap: 4px;
  width: 113px;
  white-space: nowrap;
}
.autosave input {
  position: absolute;
  opacity: 0;
}
.switch {
  display: flex;
  align-items: center;
  gap: 8px;
  width: 39px;
  height: 17px;
  padding-left: 3px;
  border: 1px solid #fff;
  border-radius: 9px;
  font-size: 9px;
}
.switch i {
  flex: none;
  width: 8px;
  height: 8px;
  border-radius: 50%;
  background: #fff;
}
.tb svg {
  fill: none;
  stroke: #fff;
  stroke-width: 1.3;
}
.save,
.undo,
.redo {
  width: 18px;
  margin-right: 28px;
}
.custom {
  width: 12px;
}
.doc-title {
  position: absolute;
  left: 0;
  right: 0;
  text-align: center;
  font-size: 13px;
  line-height: 32px;
  pointer-events: none;
}
.window-tools {
  position: relative;
  display: flex;
  align-items: center;
  margin-left: auto;
}
.window-tools button {
  width: 39px;
}
.window-tools button:last-child {
  margin-right: -14px;
}
.window-tools .avatar {
  width: 56px;
}

/* tabs */
.tabbar {
  display: flex;
  align-items: flex-start;
  height: 32px;
}
.tabs {
  display: grid;
  grid-template-columns: 59px 60px 53px 54px 116px 52px 59px 52px 54px 65px;
  padding-left: 8px;
  font-size: 13px;
}
.tabs button {
  justify-content: flex-start;
  height: 28px;
  padding-top: 2px;
}
.tabs span {
  height: 26px;
  line-height: 26px;
}
.tabs .active span {
  border-bottom: 3px solid #217346;
  font-weight: 700;
  color: #333;
}
.search {
  gap: 6px;
  height: 30px;
  font-size: 13px;
}
.share {
  display: flex;
  gap: 8px;
  margin: 4px 12px 0 auto;
}
.share button {
  gap: 4px;
  height: 22px;
  padding: 0 7px;
  background: #fff;
  border: 1px solid #edebe9;
  border-radius: 2px;
  color: #217346;
  font-size: 13px;
  font-weight: 700;
}
.share button:last-child {
  padding: 0 6px;
}
.share svg {
  fill: none;
  stroke: #217346;
}

/* ribbon */
.ribbon {
  display: grid;
  grid-template-columns: 190px 60px 177px 296px 70px 161px 116px 70px 67px 60px 77px 1fr;
  height: 106px;
  border-bottom: 1px solid #d2d0ce;
  font-size: 11px;
}
.group {
  display: flex;
  flex-direction: column;
  height: 104px;
  border-right: 1px solid #c8c6c4;
}
.group h3 {
  height: 14px;
  font-size: 11px;
  line-height: 16px;
  font-weight: 400;
  text-align: center;
  white-space: nowrap;
}
.tools {
  display: flex;
  flex: 1;
}
.one {
  justify-content: center;
}
.big,
.boxed {
  flex-direction: column;
  justify-content: flex-start;
  line-height: 15px;
}
.big {
  gap: 5px;
  padding-top: 9px;
}
.big .chev {
  margin-top: 1px;
}
.ruled span {
  padding: 0 4px;
  border-top: 1px solid #e1dfdd;
  margin-top: -1px;
}
.dim {
  color: #b0aeac;
}
.g-table .tools {
  display: grid;
  grid-template-columns: 64px 62px 64px;
}
.boxed {
  gap: 2px;
  padding-top: 1px;
}
.boxed b {
  display: grid;
  place-items: center;
  width: 38px;
  height: 38px;
  background: #fdfdfc;
  border: 1px solid #d9d7d5;
}
.boxed .omega {
  font: 20px/36px "Liberation Sans", sans-serif;
}
.boxed > .chev {
  margin-top: 4px;
}
.chev {
  fill: none;
  stroke: #444;
  stroke-width: 1.2;
}
.dim .chev {
  stroke: #a19f9d;
}
.inline {
  display: inline-block;
  vertical-align: middle;
}
.ln {
  fill: #fff;
  stroke: #605e5c;
  stroke-width: 1.5;
}
.gr {
  fill: #c8c6c4;
  stroke: #797775;
}
.gl {
  stroke: #8a8886;
  stroke-width: 1.5;
}
.bl {
  fill: none;
  stroke: #1e8bd4;
  stroke-width: 1.6;
}
.addins {
  display: grid;
  grid-template-columns: 124px 18px;
  grid-auto-rows: 36px;
  padding: 8px 0 0 17px;
  font-size: 11px;
}
.addins button {
  justify-content: flex-start;
  gap: 4px;
}
.addins .chev {
  margin-left: auto;
  margin-right: 15px;
}
.addins .bing {
  justify-content: center;
}
.g-chart .tools {
  padding-left: 9px;
}
.g-chart .big {
  width: 48px;
}
.g-chart .map {
  width: 44px;
}
.g-chart .ruled {
  width: 68px;
}
.splits {
  display: grid;
  grid-template-columns: repeat(3, 39px);
  grid-auto-rows: 26px;
  padding-top: 2px;
}
.splits button {
  gap: 4px;
}
.splits .open {
  background: #c8c6c4;
}
.g-spark .tools {
  padding-left: 9px;
}
.g-spark .big {
  width: 47px;
}
.g-filter .tools {
  display: grid;
  grid-template-columns: 56px 42px;
  padding-left: 6px;
}
.collapse {
  align-self: end;
  justify-self: end;
  width: 28px;
  height: 12px;
}
.collapse svg {
  fill: none;
  stroke: #444;
  stroke-width: 1.4;
}

/* message bar */
.infobar {
  position: relative;
  display: flex;
  align-items: center;
  height: 29px;
  padding: 0 8px 0 5px;
  background: #fcf6b4;
  border-bottom: 1px solid #e6dd8e;
  box-shadow: 0 2px 4px #ccc;
}
.message {
  display: flex;
  width: 897px;
  margin: 0 16px 0 4px;
  white-space: nowrap;
}
.message p {
  flex: 1;
  min-width: 0;
  overflow: hidden;
}
.message strong {
  margin-right: 2px;
  color: #333;
}
.infobar button {
  height: 20px;
  background: #fdfdfd;
  border: 1px solid #cbc9a8;
}
.infobar .never {
  min-width: 113px;
}
.infobar .save-as {
  min-width: 118px;
  margin-left: 9px;
}
.infobar .dismiss {
  margin-left: auto;
  border: 0;
  background: none;
}

/* formula bar */
.formula {
  display: flex;
  align-items: center;
  height: 47px;
  padding: 0 5px;
  background: #e6e6e6;
  font-size: 13px;
}
.formula > div {
  display: flex;
  align-items: center;
  height: 27px;
  background: #fdfdfd;
  border: 1px solid #d6d6d6;
}
.formula input {
  flex: 1;
  min-width: 0;
  padding: 0;
  border: 0;
  outline: 0;
  background: none;
}
.formula .namebox {
  width: 101px;
  padding: 0 4px 0 3px;
  margin-right: 14px;
  font: 300 15px/18px "Noto Sans CJK JP", sans-serif;
}
.formula .fx {
  width: 109px;
  margin: 0 4px 0 13px;
}
.fx button {
  flex: 1;
}
.fx .fn {
  font: italic 17px/20px "Liberation Serif", serif;
}
.formula .entry {
  flex: 1;
  padding: 0 3px 0 11px;
}

/* worksheet */
.workspace {
  display: flex;
  flex: 1;
  min-height: 0;
  background: #e6e6e6;
}
.sheet {
  position: relative;
  flex: 1;
  min-width: 0;
  overflow: hidden;
  background: #fff;
  border-right: 1px solid #bdbdbd;
  border-bottom: 1px solid #c0c0c0;
}
table {
  width: 1436px;
  table-layout: fixed;
  border-collapse: separate;
  border-spacing: 0;
  font: 300 15px/18px "Noto Sans CJK JP", sans-serif;
  font-feature-settings: normal;
  color: #000;
}
.c-num {
  width: 29px;
}
.c-a {
  width: 86px;
}
.c-b {
  width: 97px;
}
.c-std {
  width: 72px;
}
th,
td {
  height: 24px;
  padding: 0 2px 3px;
  border-right: 1px solid #dedede;
  border-bottom: 1px solid #dedede;
  white-space: nowrap;
  font-weight: inherit;
}
tbody tr:nth-child(even) > * {
  height: 23px;
}
.num {
  text-align: right;
}
th {
  background: #e6e6e6;
  border-color: #c6c6c6;
}
thead th {
  height: 23px;
  border-bottom-color: #a6a6a6;
}
thead th:first-child {
  padding-bottom: 0;
}
thead th svg {
  margin-left: 4px;
}
.chart {
  position: absolute;
  left: 477px;
  top: 139px;
}
.chart text {
  fill: #595959;
  font: 11px Lato, sans-serif;
}
.chart .c-title {
  font: 300 18px "Noto Sans CJK JP", sans-serif;
  font-feature-settings: normal;
}
.chart .jp {
  font: 300 12px "Noto Sans CJK JP", sans-serif;
}
.vscroll {
  display: flex;
  flex-direction: column;
  width: 20px;
  padding: 0 2px;
}
.vscroll button,
.hscroll button {
  flex: none;
  width: 16px;
  height: 16px;
  background: #fff;
  border: 1px solid #cfcfcf;
}
.vtrack {
  flex: 1;
  background: #dadada;
}
.vthumb {
  height: 69%;
  background: #fff;
  border: 1px solid #cfcfcf;
}

.sheetbar {
  display: flex;
  height: 21px;
  background: #e6e6e6;
  border-bottom: 1px solid #d6d6d6;
}
.nav {
  width: 20px;
}
.nav:first-child {
  margin-left: 9px;
}
.sheet-tab {
  width: 249px;
  margin-left: 20px;
  background: #fff;
  border-bottom: 2px solid #7db598;
  color: #217346;
  font-size: 14px;
  line-height: 18px;
}
.add {
  width: 62px;
}
.grip {
  margin: 4px 10px 0 auto;
}
.hscroll {
  display: flex;
  width: 38%;
  max-width: 548px;
  margin: 1px 19px 0 0;
}
.htrack {
  flex: 1;
  height: 16px;
  background: #dadada;
}
.hthumb {
  width: 94%;
  height: 100%;
  background: #fff;
  border: 1px solid #cfcfcf;
}

.status {
  display: flex;
  align-items: center;
  justify-content: flex-end;
  height: 31px;
  padding-right: 7px;
  font-size: 13px;
}
.status button {
  width: 29px;
  height: 31px;
}
.status .on {
  background: #c8c6c4;
}
.status svg {
  fill: none;
  stroke: #333;
}
.status .step {
  width: 13px;
}
.status .step svg {
  stroke: #666;
}
.status .pct {
  width: 42px;
  justify-content: flex-end;
}
.status input {
  width: 99px;
  height: 14px;
  margin: 0 1px;
  appearance: none;
  background: linear-gradient(#c8c6c4, #c8c6c4) center / 100% 2px no-repeat;
}
.status input::-webkit-slider-thumb {
  appearance: none;
  width: 5px;
  height: 12px;
  background: #777;
}

/* chart menu */
.menu {
  position: absolute;
  left: 483px;
  top: 118px;
  width: 283px;
  padding: 2px 0 0 1px;
  background: #fff;
  border: 1px solid #c8c6c4;
  border-width: 0 1px 1px;
  box-shadow: 1px 2px 3px #ccc;
}
.menu section {
  padding-bottom: 8px;
  border-bottom: 1px solid #e8e8e8;
}
.menu h4 {
  height: 22px;
  padding-left: 7px;
  font-size: 12px;
  line-height: 22px;
  color: #222;
}
.gallery {
  display: grid;
  grid-template-columns: repeat(5, 56px);
  grid-auto-rows: 56px;
}
.gallery .hot {
  background: #c6c6c6;
}
.axis,
.dark,
.blue,
.pale,
.deep {
  fill: none;
}
.axis {
  stroke: #8a8886;
  stroke-width: 1.6;
}
.dark {
  stroke: #3b3a39;
}
.blue {
  stroke: #1e8bd4;
  stroke-width: 1.3;
}
.pale {
  stroke: #6fb5e8;
  stroke-width: 2;
}
.deep {
  stroke: #1272ba;
}
.fill-blue {
  fill: #83beec;
  stroke: #1272ba;
}
.fill-pale {
  fill: #83beec;
}
.fill-none {
  fill: #fafafa;
}
.fill-white {
  fill: #fafafa;
  stroke: #3b3a39;
}
.dot-dark {
  fill: #3b3a39;
}
.dot-blue {
  fill: #1e8bd4;
}
.more {
  justify-content: flex-start;
  height: 24px;
  padding-left: 7px;
  color: #333;
}
.more svg {
  margin-right: 2px;
}

.tip {
  position: absolute;
  left: 688px;
  top: 177px;
  width: 188px;
  height: 176px;
  padding: 2px 0 0 5px;
  background: #fff;
  border: 1px solid #cfcfcf;
  box-shadow: 1px 1px 3px #bbb;
  color: #666;
  font-size: 11px;
  line-height: 15px;
  white-space: nowrap;
}
.tip strong {
  display: block;
  height: 18px;
  line-height: 16px;
  color: #505050;
}
.tip p {
  margin-bottom: 15px;
}
.tip i {
  display: inline-block;
  width: 11px;
  font-size: 6px;
  font-style: normal;
  line-height: 8px;
  vertical-align: middle;
}

.pin {
  position: absolute;
  width: 48px;
  height: 48px;
  border-radius: 50% 50% 0;
  background: #f50057;
  transform: rotate(45deg);
}
.pin span {
  display: block;
  transform: rotate(-45deg);
  color: #fff;
  font: 700 24px/48px Roboto, sans-serif;
  text-align: center;
}
.up {
  transform: rotate(-135deg);
}
.up span {
  transform: rotate(135deg);
}
.p1 {
  left: 118px;
  top: 74px;
}
.p2 {
  left: 479px;
  top: 36px;
}
.p3 {
  left: 656px;
  top: 83px;
}
</style>
